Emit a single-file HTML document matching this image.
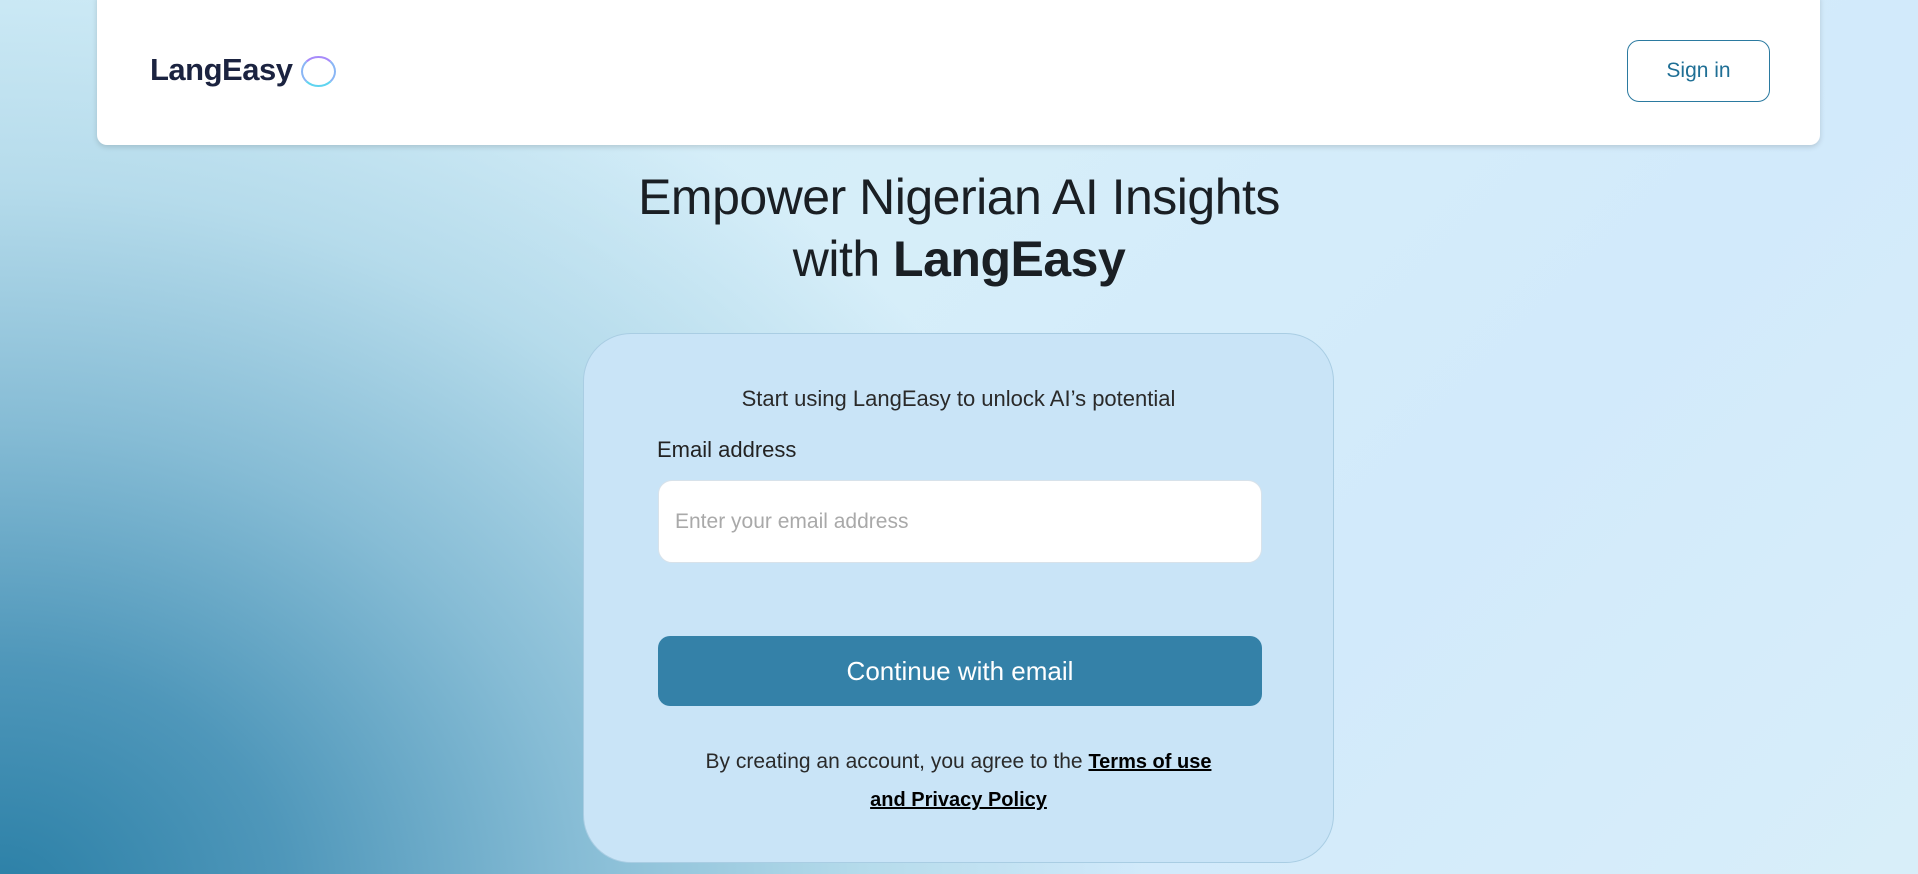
<!DOCTYPE html>
<html><head><meta charset="utf-8"><style>
*{margin:0;padding:0;box-sizing:border-box}
html,body{width:1918px;height:874px;overflow:hidden}
body{font-family:"Liberation Sans",sans-serif;position:relative;
background:
radial-gradient(ellipse 1150px 950px at 0px 900px, #2a7fa6 0%, #4f97ba 25%, #86bcd5 50%, #b5dbeb 75%, rgba(213,238,249,0) 100%),
linear-gradient(135deg,#d0ecf7 0%,#d6eef9 40%,#d2eafb 70%,#d8eef9 100%);}
.hdr{position:absolute;left:97px;top:-10px;width:1723px;height:155px;background:#fff;border-radius:10px;box-shadow:0 2px 6px rgba(0,0,0,.15)}
.logo{position:absolute;left:150px;top:52px;font-size:31px;font-weight:bold;color:#1b2340;letter-spacing:-0.5px}
.ring{position:absolute;left:301px;top:56px;width:35px;height:31px;border-radius:50%;border:2.5px solid #8ab6f5;border-top-color:#a78bfa;border-bottom-color:#5fd4f0}
.btn{position:absolute;left:1627px;top:40px;width:143px;height:62px;border:1.5px solid #2b7aa0;border-radius:12px;color:#1f6f95;font-size:21px;display:flex;align-items:center;justify-content:center}
h1{position:absolute;left:0;width:1918px;top:166px;text-align:center;font-weight:normal;font-size:50px;line-height:62px;color:#1a1f24;letter-spacing:-0.5px}
.card{position:absolute;left:583px;top:333px;width:751px;height:530px;background:#c9e4f7;border:1px solid #a9cde3;border-radius:48px}
.sub{position:absolute;left:0;width:100%;top:52px;text-align:center;font-size:22px;color:#2a2a2a}
.lbl{position:absolute;left:73px;top:103px;font-size:22px;color:#222}
.inp{position:absolute;left:74px;top:146px;width:604px;height:83px;background:#fff;border:1px solid #d8e2ea;border-radius:14px;padding-left:16px;display:flex;align-items:center;font-size:21px;color:#a9a9a9}
.cta{position:absolute;left:74px;top:302px;width:604px;height:70px;background:#3481a8;border-radius:12px;color:#fff;font-size:26px;display:flex;align-items:center;justify-content:center}
.terms{position:absolute;left:0;width:100%;top:409px;text-align:center;font-size:21px;line-height:37px;color:#2a2a2a}
.terms b{color:#000;text-decoration:underline;font-weight:bold;font-size:20px}
</style></head><body>
<div class="hdr"></div>
<div class="logo">LangEasy</div><div class="ring"></div>
<div class="btn">Sign in</div>
<h1>Empower Nigerian AI Insights<br>with <b>LangEasy</b></h1>
<div class="card">
<div class="sub">Start using LangEasy to unlock AI’s potential</div>
<div class="lbl">Email address</div>
<div class="inp">Enter your email address</div>
<div class="cta">Continue with email</div>
<div class="terms">By creating an account, you agree to the <b>Terms of use</b><br><b>and Privacy Policy</b></div>
</div>
</body></html>
